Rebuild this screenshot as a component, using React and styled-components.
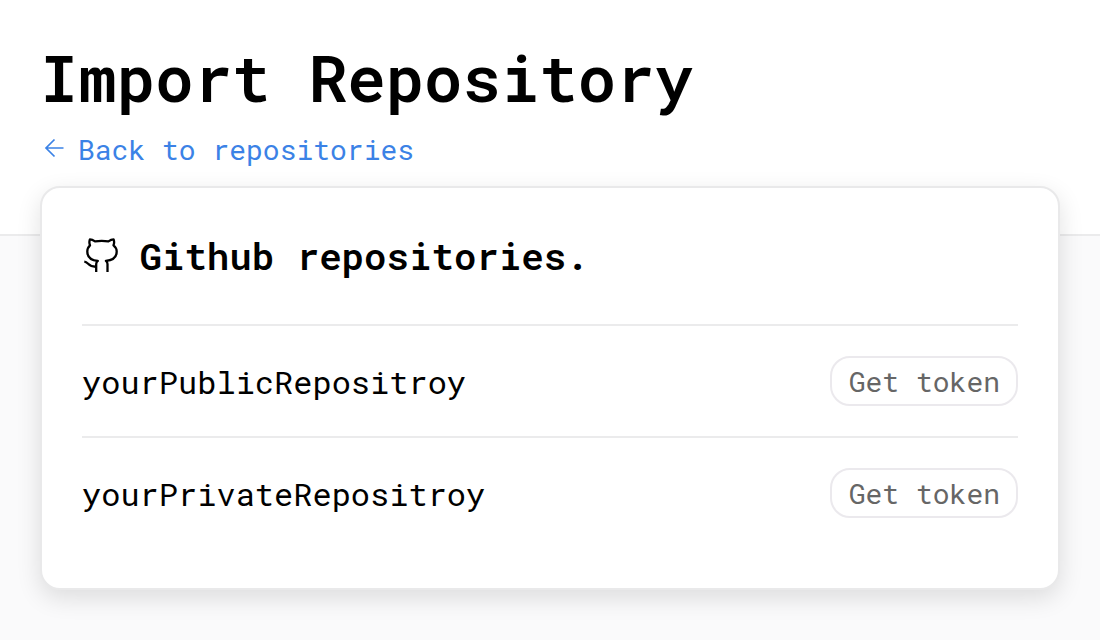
import React from "react";
import styled, { createGlobalStyle } from "styled-components";

const GlobalStyle = createGlobalStyle`
  * { box-sizing: border-box; }
  body {
    margin: 0;
    background: #fafafa;
    font-family: "Roboto Mono", "DejaVu Sans Mono", monospace;
    color: #000;
  }
`;

const Page = styled.main`
  height: 640px;
  overflow: hidden;
  padding: 37px 40px 0;
  background: linear-gradient(#fff 0 234px, #ebebec 234px 236px, #fafafb 236px);
`;

const Title = styled.h1`
  margin: 0;
  font-size: 64px;
  line-height: 80px;
  font-weight: 600;
`;

const BackLink = styled.a`
  display: flex;
  align-items: center;
  gap: 14px;
  height: 36px;
  margin: 15px 0 18px 4px;
  font-size: 28px;
  line-height: 36px;
  color: #3b82e6;
  text-decoration: none;
`;

const ArrowIcon = styled.svg`
  width: 20px;
  height: 20px;
  margin-bottom: 4px;
  fill: none;
  stroke: currentColor;
  stroke-width: 1.7;
`;

const Card = styled.section`
  height: 404px;
  padding: 0 40px;
  border: 2px solid #e9e9ea;
  border-radius: 20px;
  background: #fff;
  box-shadow: 0 8px 24px rgba(0, 0, 0, 0.12);
`;

const CardHeader = styled.header`
  display: flex;
  align-items: center;
  gap: 20px;
  height: 136px;
`;

const GithubIcon = styled.svg`
  width: 37.5px;
  height: 36px;
  overflow: visible;
  fill: none;
  stroke: currentColor;
  stroke-width: 2.3;
  stroke-linejoin: round;
`;

const CardTitle = styled.h3`
  margin: 0;
  font-size: 37.44px;
  line-height: 48px;
  font-weight: 600;
`;

const RepoList = styled.ul`
  margin: 0;
  padding: 0;
  list-style: none;
`;

const RepoRow = styled.li`
  display: flex;
  align-items: center;
  justify-content: space-between;
  height: 112px;
  border-top: 2px solid #ebebec;
  font-size: 32px;
`;

const TokenButton = styled.button`
  height: 50px;
  padding: 2px 16px 0 16.8px;
  border: 2px solid #ebe9ed;
  border-radius: 20px;
  background: #fff;
  color: #666;
  font: inherit;
  font-size: 28px;
  line-height: 44px;
`;

const repositories = ["yourPublicRepositroy", "yourPrivateRepositroy"];

export default function App() {
  return (
    <Page>
      <GlobalStyle />
      <Title>Import Repository</Title>
      <BackLink>
        <ArrowIcon viewBox="0 0 20 20">
          <path d="M19.500 10H2.300M10.500 1.500L2 10L10.500 18.500" />
        </ArrowIcon>
        Back to repositories
      </BackLink>
      <Card>
        <CardHeader>
          <GithubIcon viewBox="0 0 37.5 36">
            <path d="M14.2 34V26Q14.200 24 15.800 22.900C9 22.300 5.300 19 5.300 13.500Q5.300 9.800 8 7.300Q6.800 4.500 7.900 1.400Q10.200 1.400 13 3.400Q19.700 2.300 26.400 3.400Q29.200 1.400 31.600 1.400Q32.700 4.500 31.500 7.300Q34.700 9.800 34.700 13.500C34.700 19 30.500 22.300 23.900 22.900Q25.500 24 25.500 26V34M2.300 23.600C6.800 24 6 29.200 14.200 28.700" />
          </GithubIcon>
          <CardTitle>Github repositories.</CardTitle>
        </CardHeader>
        <RepoList>
          {repositories.map((name) => (
            <RepoRow key={name}>
              {name}
              <TokenButton>Get token</TokenButton>
            </RepoRow>
          ))}
        </RepoList>
      </Card>
    </Page>
  );
}
